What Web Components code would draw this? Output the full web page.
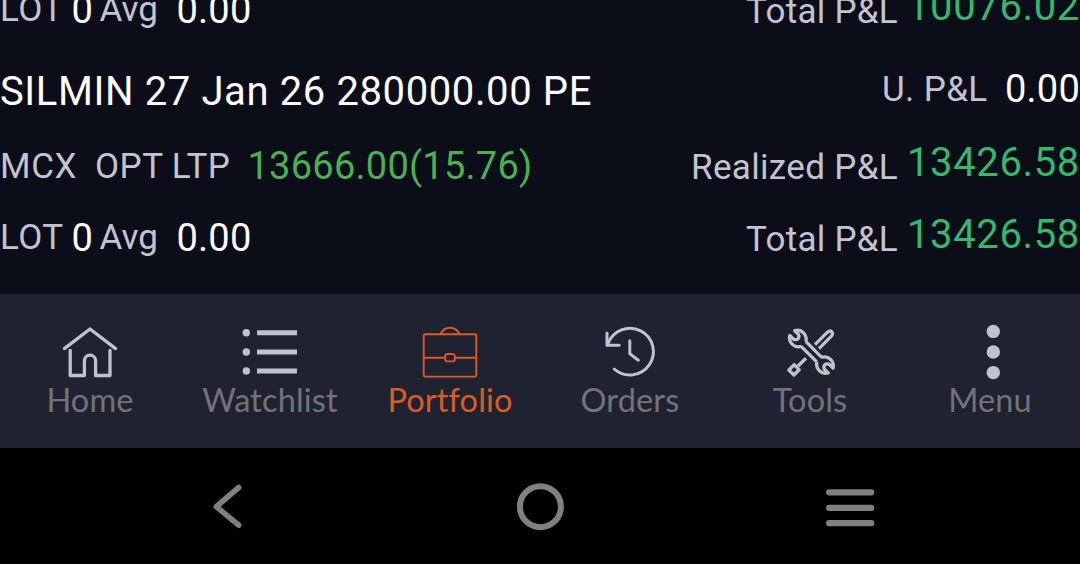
<!DOCTYPE html>
<html lang="en">
<head>
<meta charset="utf-8">
<title>Portfolio</title>
<style>
body{margin:0;width:1080px;height:564px;overflow:hidden;background:#000;font-family:Roboto,"Liberation Sans",sans-serif}
</style>
</head>
<body>
<portfolio-screen></portfolio-screen>
<script>
/* Text run tracked out to a fixed width. Attributes: w width, s font size, t top space, l left space, c colour */
class FitText extends HTMLElement{
  connectedCallback(){
    const a=n=>this.getAttribute(n);
    const root=this.attachShadow({mode:'open'});
    root.innerHTML=`<style>
      :host{display:block;flex:none;white-space:pre;line-height:48px;width:${a('w')}px;font-size:${a('s')||35}px;margin-top:${a('t')||0}px;margin-left:${a('l')||0}px;color:${a('c')||'#c2c4cf'}}
      span{display:inline-block}
    </style><span><slot></slot></span>`;
    const span=root.querySelector('span');
    const natural=span.getBoundingClientRect().width;
    span.style.letterSpacing=((+a('w')-natural)/this.textContent.length).toFixed(3)+'px';
  }
}
/* One position: three lines, each with a left and a right side. Without a name only the totals line is drawn */
class PositionCard extends HTMLElement{
  connectedCallback(){
    const a=n=>this.getAttribute(n);
    const g='#35b76c';
    const details=a('name')?`
    <div class="row"><div><fit-text w="592" s="40" t="14" c="#fff">${a('name')}</fit-text></div>
      <div><fit-text w="105.5" t="12">U. P&amp;L</fit-text><fit-text w="75" s="38" t="11" l="17.5" c="#fff">0.00</fit-text></div></div>
    <div class="row"><div><fit-text w="77" t="13">MCX</fit-text><fit-text w="68.5" t="13" l="18">OPT</fit-text><fit-text w="58.8" t="13" l="8.2">LTP</fit-text><fit-text w="285" s="38" t="12" l="17" c="#4caf50">${a('ltp')}</fit-text></div>
      <div><fit-text w="207" t="14">Realized P&amp;L</fit-text><fit-text w="173" s="40" t="9" l="9" c="${g}">${a('pl')}</fit-text></div></div>`:'';
    this.attachShadow({mode:'open'}).innerHTML=`<style>
      :host{display:block;flex:none}
      .row{display:flex;justify-content:space-between;height:76px}
      .row>div{display:flex;align-items:flex-start}
    </style>${details}
    <div class="row"><div><fit-text w="63.5" t="8">LOT</fit-text><fit-text w="21.5" s="38" t="8" l="8" c="#fff">0</fit-text><fit-text w="58.5" t="8" l="6.5">Avg</fit-text><fit-text w="75" s="38" t="8" l="18.5" c="#fff">0.00</fit-text></div>
      <div><fit-text w="152" t="10">Total P&amp;L</fit-text><fit-text w="173" s="40" t="5" l="9" c="${g}">${a('pl')}</fit-text></div></div>`;
  }
}
const WRENCH='<path d="M26 19.7 41.7 35.3M26 19.9C27.2 13.5 22.5 6.8 14.6 8.6L18.6 12.6C19.6 16.6 17.6 18.4 13.8 17.4L9.8 13.4C8 20.5 14.5 26.6 21.6 24.2"/>';
const ICONS={
  home:`<g stroke-width="3.3" stroke-linecap="round" stroke-linejoin="round"><path d="M4.4 26.6 30 7 55.6 26.6"/><path d="M10.2 28.5V53.5H24.4V38.8a5.6 5.6 0 0 1 11.2 0V53.5H50V28.5"/></g>`,
  list:`<g fill="currentColor" stroke="none"><circle cx="6.3" cy="10.8" r="3.7"/><circle cx="6.3" cy="30" r="3.7"/><circle cx="6.3" cy="49" r="3.7"/><path d="M17 8.2h40v5H17zM17 27.4h40v5H17zM17 46.5h40v5H17z"/></g>`,
  bag:`<g stroke-width="1.9"><rect x="3.7" y="12.2" width="52.6" height="42.4" rx="1.5"/><path d="M3.7 35.7H25.2M34.8 35.7H56.3M20.8 12C22.5 7.5 26 5.8 30 5.8s7.5 1.7 9.2 6.2"/><rect x="25.2" y="32" width="9.6" height="7.4" rx="2.4"/></g>`,
  history:`<g stroke-width="3" stroke-linecap="round" stroke-linejoin="round"><path d="M8 21.6A23.4 23.4 0 1 1 14.3 47"/><path d="M7 11v12.2H19.2"/><path d="M29.8 18.8V31.8L38.4 38.2"/></g>`,
  tools:`<g stroke-width="3.3" stroke-linejoin="round">${WRENCH}<g transform="rotate(180 31.4 29.8)">${WRENCH}</g><path d="M35 22.6 47.5 10.2C50.8 7.4 54 10.6 51.6 13.8L39 26.6M26 36.2 18 44M8.9 48 14.2 42.7 19.2 47.8 13.9 53Z"/></g>`,
  more:`<g fill="currentColor" stroke="none"><circle cx="33.3" cy="9.4" r="6.7"/><circle cx="33.3" cy="30" r="6.7"/><circle cx="33.3" cy="50.6" r="6.7"/></g>`,
  back:`<path stroke-width="5.6" stroke-linecap="round" stroke-linejoin="round" d="M40.7 29.5 18.3 48.7 40.7 67.2"/>`,
  circle:`<circle cx="31.4" cy="48.7" r="20.5" stroke-width="6"/>`,
  recents:`<path stroke-width="6.3" stroke-linecap="round" d="M9.2 34.3h42M9.2 49.8h42M9.2 65.2h42"/>`
};
/* Tab of the bottom bar; its label is slotted */
class NavTab extends HTMLElement{
  connectedCallback(){
    this.attachShadow({mode:'open'}).innerHTML=`<style>
      :host{display:flex;flex:1 1 0;min-width:0;flex-direction:column;align-items:center;padding-top:28px;color:#737376;font:32.5px/36px Lato,"Liberation Sans",sans-serif;font-variant-ligatures:none;letter-spacing:.15px}
      :host([active]){color:#db5b22}
      svg{display:block;flex:none;color:#c0c2cb}
      :host([active]) svg{color:#db5b22}
      span{white-space:nowrap}
    </style><svg width="60" height="60" viewBox="0 0 60 60" fill="none" stroke="currentColor">${ICONS[this.getAttribute('icon')]}</svg><span><slot></slot></span>`;
  }
}
/* System key of the phone */
class SystemKey extends HTMLElement{
  connectedCallback(){
    this.attachShadow({mode:'open'}).innerHTML=`<style>:host{display:block;color:#808080}svg{display:block}</style>
      <svg width="60" height="96" viewBox="0 0 60 96" fill="none" stroke="currentColor">${ICONS[this.getAttribute('icon')]}</svg>`;
  }
}
class PortfolioScreen extends HTMLElement{
  connectedCallback(){
    this.attachShadow({mode:'open'}).innerHTML=`<style>
      :host{display:flex;flex-direction:column;width:1080px;height:564px}
      main{display:flex;flex-direction:column;justify-content:flex-end;box-sizing:border-box;height:294px;padding-bottom:12px;overflow:hidden;background:#0b0e19}
      nav{display:flex;height:154px;background:#1f2230}
      footer{display:flex;justify-content:space-between;box-sizing:border-box;height:116px;padding:10px 200px 10px 198px;background:#000}
    </style>
    <main>
      <position-card pl="10076.02"></position-card>
      <position-card name="SILMIN 27 Jan 26 280000.00 PE" ltp="13666.00(15.76)" pl="13426.58"></position-card>
    </main>
    <nav>
      <nav-tab icon="home">Home</nav-tab><nav-tab icon="list">Watchlist</nav-tab><nav-tab icon="bag" active>Portfolio</nav-tab><nav-tab icon="history">Orders</nav-tab><nav-tab icon="tools">Tools</nav-tab><nav-tab icon="more">Menu</nav-tab>
    </nav>
    <footer><system-key icon="back"></system-key><system-key icon="circle"></system-key><system-key icon="recents"></system-key></footer>`;
  }
}
customElements.define('fit-text',FitText);
customElements.define('position-card',PositionCard);
customElements.define('nav-tab',NavTab);
customElements.define('system-key',SystemKey);
customElements.define('portfolio-screen',PortfolioScreen);
</script>
</body>
</html>
